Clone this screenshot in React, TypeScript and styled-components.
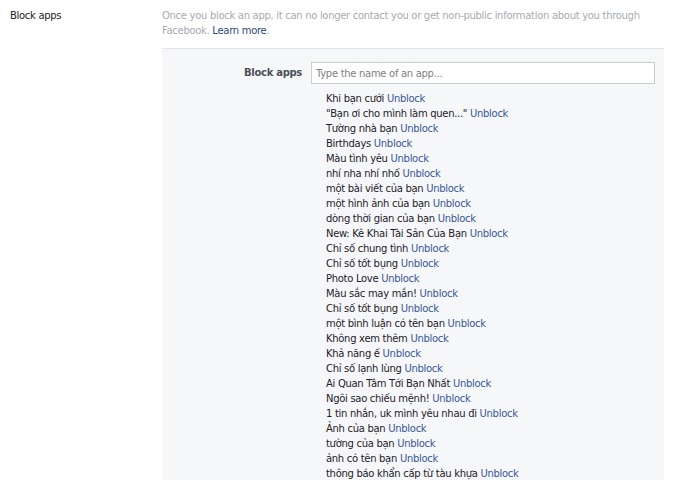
import React from "react";
import styled, { createGlobalStyle } from "styled-components";

const apps = [
  "Khi bạn cưới",
  "\"Bạn ơi cho mình làm quen...\"",
  "Tường nhà bạn",
  "Birthdays",
  "Màu tình yêu",
  "nhí nha nhí nhố",
  "một bài viết của bạn",
  "một hình ảnh của bạn",
  "dòng thời gian của bạn",
  "New: Kê Khai Tài Sản Của Bạn",
  "Chỉ số chung tình",
  "Chỉ số tốt bụng",
  "Photo Love",
  "Màu sắc may mắn!",
  "Chỉ số tốt bụng",
  "một bình luận có tên bạn",
  "Không xem thêm",
  "Khả năng ế",
  "Chỉ số lạnh lùng",
  "Ai Quan Tâm Tới Bạn Nhất",
  "Ngôi sao chiếu mệnh!",
  "1 tin nhắn, uk mình yêu nhau đi",
  "Ảnh của bạn",
  "tường của bạn",
  "ảnh có tên bạn",
  "thông báo khẩn cấp từ tàu khựa",
];

const GlobalStyle = createGlobalStyle`
  body {
    margin: 0;
    background: #fff;
    font-family: "DejaVu Sans", "Liberation Sans", sans-serif;
    font-size: 10px;
    letter-spacing: -0.3px;
    color: #1d2129;
  }
`;

const Page = styled.div`
  display: flex;
  align-items: flex-start;
  padding: 8px 16px 0 10px;
  height: 480px;
  box-sizing: border-box;
  overflow: hidden;
`;

const SectionLabel = styled.div`
  width: 152px;
  flex-shrink: 0;
  line-height: 15px;
  color: #1d2129;
`;

const Content = styled.div`
  width: 502px;
  display: flex;
  flex-direction: column;
`;

const Description = styled.p`
  margin: 0 0 10px;
  line-height: 15px;
  color: #a7abb3;
`;

const LearnMore = styled.a`
  color: #29487d;
  text-decoration: none;
`;

const Panel = styled.div`
  background: #f6f7f9;
  border-top: 1px solid #e5e6e9;
  padding: 13px 9px 0 0;
  display: grid;
  grid-template-columns: 140px 1fr;
  column-gap: 9px;
  row-gap: 7px;
`;

const FieldLabel = styled.label`
  text-align: right;
  font-weight: bold;
  line-height: 22px;
  color: #4b4f56;
`;

const AppInput = styled.input`
  height: 22px;
  box-sizing: border-box;
  border: 1px solid #c9ced6;
  background: #fff;
  padding: 0 4px;
  font-family: "DejaVu Sans", "Liberation Sans", sans-serif;
  font-size: 10px;
  letter-spacing: -0.3px;
  outline: none;
  &::placeholder {
    color: #7f7f7f;
  }
`;

const AppList = styled.ul`
  grid-column: 2;
  list-style: none;
  margin: 0;
  padding: 0 0 0 15px;
`;

const AppRow = styled.li`
  line-height: 15px;
  white-space: nowrap;
  color: #1d2129;
`;

const Unblock = styled.a`
  color: #365899;
  text-decoration: none;
  cursor: pointer;
`;

export default function App() {
  return (
    <>
      <GlobalStyle />
      <Page>
        <SectionLabel>Block apps</SectionLabel>
        <Content>
          <Description>
            Once you block an app, it can no longer contact you or get non-public information about you through
            Facebook. <LearnMore href="#">Learn more</LearnMore>.
          </Description>
          <Panel>
            <FieldLabel htmlFor="block-app">Block apps</FieldLabel>
            <AppInput id="block-app" placeholder="Type the name of an app..." />
            <AppList>
              {apps.map((name, i) => (
                <AppRow key={i}>
                  {name} <Unblock>Unblock</Unblock>
                </AppRow>
              ))}
            </AppList>
          </Panel>
        </Content>
      </Page>
    </>
  );
}
